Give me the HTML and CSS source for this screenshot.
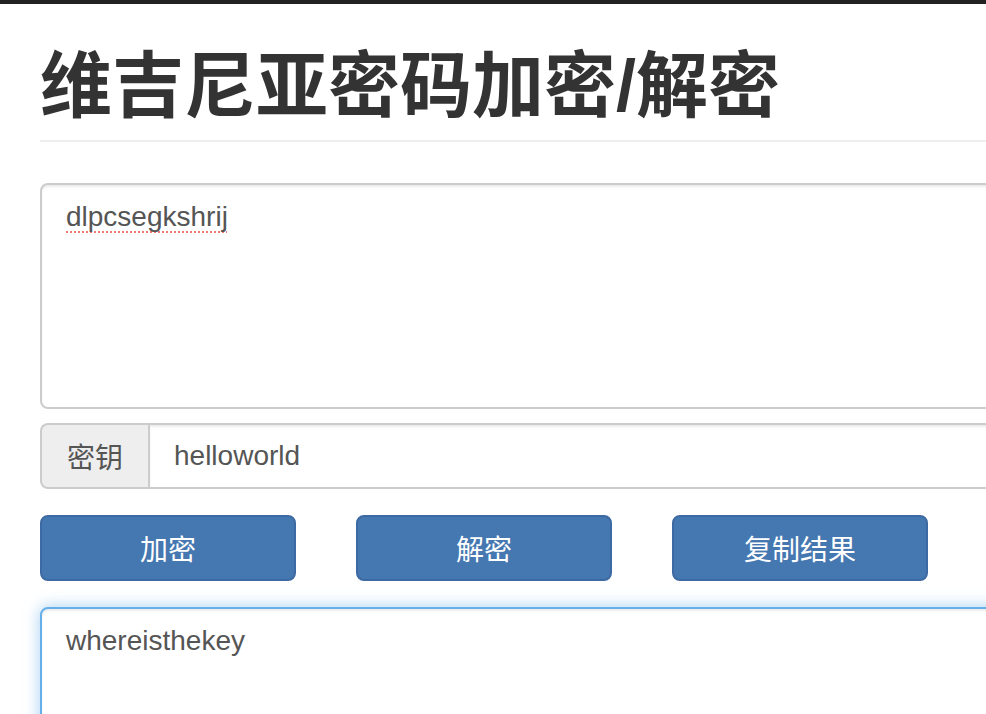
FILE: index.html
```html
<!DOCTYPE html>
<html lang="zh-CN">
<head>
<meta charset="utf-8">
<title>维吉尼亚密码加密/解密</title>
<link rel="stylesheet" href="styles.css">
</head>
<body>
<div class="topbar"></div>
<div class="container">
  <div class="page-header">
    <h1>维吉尼亚密码加密/解密</h1>
  </div>
  <textarea class="form-control area spell" spellcheck="false">dlpcsegkshrij</textarea>
  <div class="input-group">
    <span class="addon">密钥</span>
    <input class="key-input" type="text" value="helloworld">
  </div>
  <div class="btn-row">
    <button class="btn">加密</button>
    <button class="btn">解密</button>
    <button class="btn">复制结果</button>
  </div>
  <textarea class="form-control area out focus">whereisthekey</textarea>
</div>
</body>
</html>
```

FILE: styles.css
```css
html, body {
  margin: 0;
  padding: 0;
  background: #fff;
  overflow: hidden;
  height: 714px;
}
body {
  font-family: "Liberation Sans", "Noto Sans CJK SC", sans-serif;
  color: #333;
}
.topbar {
  height: 4px;
  background: #222;
}
.container {
  width: 1200px;
  padding-left: 40px;
}
.page-header {
  margin-top: 42px;
  padding-bottom: 14px;
  border-bottom: 2px solid #eee;
}
.page-header h1 {
  margin: 0;
  font-family: "Liberation Sans", "Noto Sans CJK SC", sans-serif;
  font-weight: bold;
  font-size: 72px;
  line-height: 80px;
  color: #333;
}
.area {
  display: block;
  box-sizing: border-box;
  width: 1100px;
  height: 226px;
  margin: 0;
  padding: 12px 24px;
  border: 2px solid #ccc;
  border-radius: 8px;
  box-shadow: inset 0 2px 2px rgba(0,0,0,.075);
  font-family: "Liberation Sans", "Noto Sans CJK SC", sans-serif;
  font-size: 28px;
  line-height: 40px;
  color: #555;
  resize: none;
  outline: none;
  background: #fff;
}
.spell {
  margin-top: 41px;
  text-decoration: underline dotted #f07a72;
  text-decoration-thickness: 2px;
  text-decoration-skip-ink: none;
  text-underline-offset: 5px;
}
.input-group {
  display: flex;
  margin-top: 14px;
  width: 1100px;
  height: 66px;
}
.addon {
  box-sizing: border-box;
  width: 108px;
  display: flex;
  align-items: center;
  justify-content: center;
  background: #eee;
  border: 2px solid #ccc;
  border-right: 0;
  border-radius: 8px 0 0 8px;
  font-family: "Liberation Sans", "Noto Sans CJK SC", sans-serif;
  font-size: 28px;
  color: #555;
}
.key-input {
  flex: 1;
  box-sizing: border-box;
  height: 66px;
  margin: 0;
  padding: 0 24px;
  border: 2px solid #ccc;
  border-radius: 0 8px 8px 0;
  box-shadow: inset 0 2px 2px rgba(0,0,0,.075);
  font-family: "Liberation Sans", "Noto Sans CJK SC", sans-serif;
  font-size: 28px;
  color: #555;
  outline: none;
}
.btn-row {
  display: flex;
  gap: 60px;
  margin-top: 26px;
}
.btn {
  box-sizing: border-box;
  width: 256px;
  height: 66px;
  margin: 0;
  padding: 0;
  background: #4577b0;
  border: 2px solid #3d6aa2;
  border-radius: 8px;
  color: #fff;
  font-family: "Liberation Sans", "Noto Sans CJK SC", sans-serif;
  font-size: 28px;
  cursor: pointer;
}
.out {
  margin-top: 26px;
}
.focus {
  border-color: #66afe9;
  box-shadow: inset 0 2px 2px rgba(0,0,0,.075), 0 0 16px rgba(102,175,233,.6);
}
```
